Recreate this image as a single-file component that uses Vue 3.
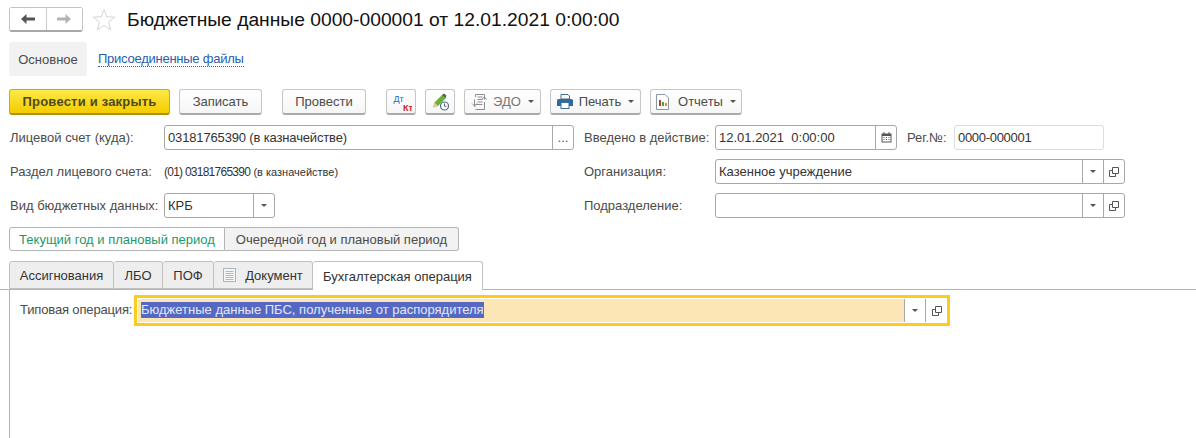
<template>
  <div class="page">
    <header class="head">
      <div class="nav">
        <button class="nav-btn">
          <svg width="16" height="12" viewBox="0 0 16 12"><path d="M1 6 6.500 1V4.500H15V7.500H6.500V11Z" fill="#555"/></svg>
        </button>
        <button class="nav-btn next">
          <svg width="16" height="12" viewBox="0 0 16 12"><path d="M15 6 9.500 1V4.500H1V7.500H9.500V11Z" fill="#b4b4b4"/></svg>
        </button>
      </div>
      <svg class="star" width="24" height="23" viewBox="0 0 24 23"><path d="M12 1.500 14.800 8.800 22.800 9.200 16.500 14.100 18.700 21.800 12 17.500 5.300 21.800 7.500 14.100 1.200 9.200 9.200 8.800Z" fill="#fff" stroke="#d4d4d4"/></svg>
      <h1>Бюджетные данные 0000-000001 от 12.01.2021 0:00:00</h1>
    </header>

    <nav class="sections">
      <span class="section active">Основное</span>
      <a class="section-link">Присоединенные файлы</a>
    </nav>

    <div class="toolbar">
      <button class="btn primary">Провести и закрыть</button>
      <button class="btn save">Записать</button>
      <button class="btn post">Провести</button>
      <button class="btn icon">
        <svg width="22" height="20" viewBox="0 0 22 20"><text x="3.500" y="10" class="dt">Дт</text><text x="13" y="18.500" class="kt">Кт</text></svg>
      </button>
      <button class="btn icon">
        <svg width="20" height="20" viewBox="0 0 20 20">
          <path d="M3 15.500 4.500 10.500 12 3 15.500 6.500 8 14Z" fill="#6eaf3c"/>
          <path d="M12 3 13 2 14.500 1.800 16.200 3.500 16 5 15.500 6.500Z" fill="#3f6d3a"/>
          <path d="M3 15.500 4.500 10.500 8 14Z" fill="#e6c9a0"/>
          <circle cx="14.500" cy="14" r="4" fill="#fff" stroke="#4d6a80" stroke-width="1.200"/>
          <path d="M14.500 11.500V14.300H16.500" fill="none" stroke="#4d6a80"/>
        </svg>
      </button>
      <button class="btn edo">
        <svg width="16" height="16" viewBox="0 0 16 16" fill="none" stroke="#8e8e8e"><path d="M4.500 .5H13.500V5.500M4.500 .5V3M6.500 3H11.500M6.500 5.500H11.500M6.500 8H11.500M4.500 10.500H11.500M3.500 5.500V12.500H4.500M4.500 15.500H13.500V8M1 9.500 3.500 12 6 9.500M10.500 5.500 13.500 3 15.500 5.500"/></svg>
        <span class="muted">ЭДО</span><i class="caret"></i>
      </button>
      <button class="btn print">
        <svg width="16" height="15" viewBox="0 0 16 15">
          <path d="M4 .5h7l1.500 1.500V5H4Z" fill="#fff" stroke="#3f6f9a"/>
          <path d="M0 6.500A1.500 1.500 0 0 1 1.500 5h13A1.500 1.500 0 0 1 16 6.500V12H0Z" fill="#2f6a9e"/>
          <rect x="4" y="8.500" width="8" height="6" fill="#fff" stroke="#3f6f9a"/>
        </svg>
        <span>Печать</span><i class="caret"></i>
      </button>
      <button class="btn reports">
        <svg class="rep-ic" width="13" height="16" viewBox="0 0 13 16">
          <path d="M.5 .5H9L12.500 4V15.500H.5Z" fill="#fff" stroke="#8a97a5"/>
          <rect x="3" y="6" width="2" height="6" fill="#c0392b"/><rect x="6" y="8" width="2" height="4" fill="#5aa02c"/><rect x="9" y="9" width="2" height="3" fill="#e08a1e"/>
        </svg>
        <span>Отчеты</span><i class="caret"></i>
      </button>
    </div>

    <div class="form">
      <div class="col left">
        <div class="row">
          <label>Лицевой счет (куда):</label>
          <div class="field account">
            <span class="value tight">03181765390 (в казначействе)</span>
            <span class="cell dots">...</span>
          </div>
        </div>
        <div class="row">
          <label>Раздел лицевого счета:</label>
          <span class="plain"><b>(01) 03181765390</b> <small>(в казначействе)</small></span>
        </div>
        <div class="row">
          <label>Вид бюджетных данных:</label>
          <div class="field kind">
            <span class="value">КРБ</span>
            <span class="cell"><i class="tri"></i></span>
          </div>
        </div>
      </div>
      <div class="col right">
        <div class="row">
          <label>Введено в действие:</label>
          <div class="field date">
            <span class="value">12.01.2021&nbsp; 0:00:00</span>
            <span class="cell cal">
              <svg width="11" height="11" viewBox="0 0 11 11"><path d="M.5 1.500h10v9H.5Z" fill="#555"/><rect x="1.500" y="4" width="8" height="5.500" fill="#fff"/><path d="M3 0v2M8 0v2" stroke="#555"/><path d="M2.500 5.500h1M5 5.500h1M7.500 5.500h1M2.500 7.500h1M5 7.500h1M7.500 7.500h1" stroke="#555"/></svg>
            </span>
          </div>
          <label class="reg">Рег.№:</label>
          <div class="field number"><span class="value num">0000-000001</span></div>
        </div>
        <div class="row">
          <label>Организация:</label>
          <div class="field wide">
            <span class="value">Казенное учреждение</span>
            <span class="cell"><i class="tri"></i></span>
            <span class="cell open"><svg width="10" height="10" viewBox="0 0 10 10" fill="none" stroke="#555"><path d="M3.500 .5H9.500V6.500H3.500Z"/><path d="M3 3.500H.5V9.500H6.500V7"/></svg></span>
          </div>
        </div>
        <div class="row">
          <label>Подразделение:</label>
          <div class="field wide">
            <span class="value"></span>
            <span class="cell"><i class="tri"></i></span>
            <span class="cell open"><svg width="10" height="10" viewBox="0 0 10 10" fill="none" stroke="#555"><path d="M3.500 .5H9.500V6.500H3.500Z"/><path d="M3 3.500H.5V9.500H6.500V7"/></svg></span>
          </div>
        </div>
      </div>
    </div>

    <div class="switch">
      <span class="seg on">Текущий год и плановый период</span>
      <span class="seg">Очередной год и плановый период</span>
    </div>

    <div class="tabs">
      <span class="tab t1">Ассигнования</span>
      <span class="tab t2">ЛБО</span>
      <span class="tab t3">ПОФ</span>
      <span class="tab t4">
        <svg width="13" height="14" viewBox="0 0 13 14"><rect x=".5" y=".5" width="12" height="13" fill="#f4f6f8" stroke="#a9b4bf"/><path d="M2.500 3.500h8M2.500 5.500h8M2.500 7.500h8M2.500 9.500h8M2.500 11.500h8" stroke="#a9bccd"/></svg>
        Документ
      </span>
      <span class="tab t5 current">Бухгалтерская операция</span>
    </div>

    <div class="pane">
      <label>Типовая операция:</label>
      <div class="focus">
        <div class="focus-input"><span class="selected">Бюджетные данные ПБС, полученные от распорядителя</span></div>
        <span class="cell c1"><i class="tri"></i></span>
        <span class="cell c2"><svg width="10" height="10" viewBox="0 0 10 10" fill="none" stroke="#555"><path d="M3.500 .5H9.500V6.500H3.500Z"/><path d="M3 3.500H.5V9.500H6.500V7"/></svg></span>
      </div>
    </div>
  </div>
</template>

<script setup>
</script>

<style>
html, body { margin: 0; background: #fff; overflow: hidden; }
</style>

<style scoped>
.page {
  width: 1196px;
  height: 438px;
  overflow: hidden;
  font-family: "Liberation Sans", Arial, sans-serif;
  font-size: 13px;
  color: #333;
  box-sizing: border-box;
}
button { font: inherit; margin: 0; }
label { color: #4b4b4b; white-space: nowrap; }

.head { display: flex; align-items: center; height: 25px; padding: 7px 0 0 9px; }
.nav {
  display: flex; width: 74px; height: 25px; box-sizing: border-box;
  border: 1px solid #c4c4c4; border-bottom: 2px solid #a8a8a8; border-radius: 3px;
}
.nav-btn { flex: 1; display: flex; align-items: center; justify-content: center; padding: 0; border: 0; background: #fff; }
.nav-btn.next { border-left: 1px solid #ccc; }
.star { margin-left: 9px; }
h1 { margin: 0 0 0 11px; font-size: 19.25px; font-weight: 400; color: #111; white-space: nowrap; }

.sections { display: flex; align-items: center; height: 34px; margin: 10px 0 0 9px; }
.section.active {
  display: flex; align-items: center; justify-content: center;
  width: 78px; height: 34px; background: #f2f2f2; border-radius: 3px; color: #4b4b4b;
}
.section-link {
  margin-left: 11px; color: #2a5db0; letter-spacing: -.25px;
  border-bottom: 1px dotted #2a5db0; line-height: 15px;
}

.toolbar { display: flex; height: 26px; margin: 13px 0 0 9px; }
.btn {
  display: flex; align-items: center; justify-content: center; gap: 6px;
  height: 26px; padding: 0; box-sizing: border-box; color: #4b4b4b;
  background: linear-gradient(#fff, #f6f6f6);
  border: 1px solid #c6c6c6; border-bottom: 2px solid #aaa; border-radius: 3px;
}
.primary { width: 161px; font-weight: 700; letter-spacing: .2px; color: #4c4a1e; background: linear-gradient(#fde948, #f4cc00); border-color: #c9aa10; border-bottom-color: #a9930f; }
.save { width: 83px; margin-left: 9px; }
.post { width: 84px; margin-left: 20px; }
.icon { width: 30px; margin-left: 9px; }
.post + .icon { margin-left: 20px; }
.edo { width: 77px; margin-left: 9px; }
.print { width: 91px; margin-left: 9px; }
.reports { width: 92px; margin-left: 9px; }
.rep-ic { margin-right: 3px; }
.muted { color: #777; }
.caret { width: 0; height: 0; border: 3px solid transparent; border-top: 3px solid #555; border-bottom: 0; margin-left: 1px; }
.dt { font: 400 9px "Liberation Sans", sans-serif; fill: #2a6cb0; }
.kt { font: 700 9px "Liberation Sans", sans-serif; fill: #d0201c; }

.form { display: flex; margin: 10px 0 0 10px; }
.col { display: flex; flex-direction: column; gap: 9px; }
.left { width: 574px; }
.row { display: flex; align-items: center; height: 25px; }
.left label { width: 154px; flex: none; }
.right label { width: 131px; flex: none; }
.right label.reg { width: 47px; margin-left: 10px; }
.field {
  display: flex; height: 25px; box-sizing: border-box;
  border: 1px solid #a8a8a8; border-radius: 3px; background: #fff; color: #333;
}
.value { flex: 1; padding-left: 3px; line-height: 23px; white-space: nowrap; overflow: hidden; }
.tight { letter-spacing: -.15px; }
.num { letter-spacing: -.3px; }
.cell {
  flex: none; display: flex; align-items: center; justify-content: center;
  width: 20px; border-left: 1px solid #a8a8a8;
}
.dots { color: #555; }
.account { width: 410px; }
.kind { width: 111px; }
.date { width: 182px; }
.number { width: 150px; border-color: #dcdcdc; }
.wide { width: 410px; }
.plain { white-space: nowrap; color: #333; font-size: 12px; }
.plain b { font-weight: 400; letter-spacing: -.75px; }
.plain small { font-size: 11px; }
.tri { width: 0; height: 0; border: 3px solid transparent; border-top: 3px solid #555; border-bottom: 0; }

.switch { display: flex; margin: 9px 0 0 9px; height: 24px; }
.seg {
  display: flex; align-items: center; justify-content: center; box-sizing: border-box;
  height: 24px; width: 234px; background: #f2f2f2; color: #4b4b4b;
  border: 1px solid #b4b4b4; border-left: 0; border-radius: 0 3px 3px 0;
}
.seg.on {
  width: 216px; background: #fff; color: #1a9a6c;
  border-left: 1px solid #b4b4b4; border-radius: 3px 0 0 3px;
}

.tabs { display: flex; height: 28px; margin-top: 10px; padding-left: 9px; border-bottom: 1px solid #b4b4b4; }
.tab {
  display: flex; align-items: center; justify-content: center; gap: 9px; box-sizing: border-box;
  height: 28px; background: #eee; color: #333;
  border: 1px solid #c0c0c0; border-left: 0; border-radius: 3px 3px 0 0;
}
.t1 { width: 105px; border-left: 1px solid #c0c0c0; }
.t2 { width: 49px; }
.t3 { width: 51px; }
.t4 { width: 99px; }
.t5 { width: 170px; }
.current { height: 29px; background: #fff; border-bottom: 0; color: #333; }

.pane { display: flex; align-items: flex-start; height: 149px; margin-left: 9px; padding: 5px 0 0 10px; border-left: 1px solid #b4b4b4; box-sizing: border-box; }
.pane label { width: 114px; line-height: 29px; flex: none; letter-spacing: -.15px; }
.focus {
  display: flex; width: 816px; height: 31px; box-sizing: border-box;
  border: 3px solid #fccb1e; padding: 1px 0; background: #fff;
}
.focus .c1 { width: 20px; }
.focus .c2 { width: 21px; }
.focus-input { flex: 1; height: 23px; margin-left: 1px; padding: 3px 0 0 3px; box-sizing: border-box; background: #fde6b5; }
.selected { display: block; width: fit-content; height: 16px; line-height: 16px; background: #5468c4; color: #e4e8f8; }
</style>
